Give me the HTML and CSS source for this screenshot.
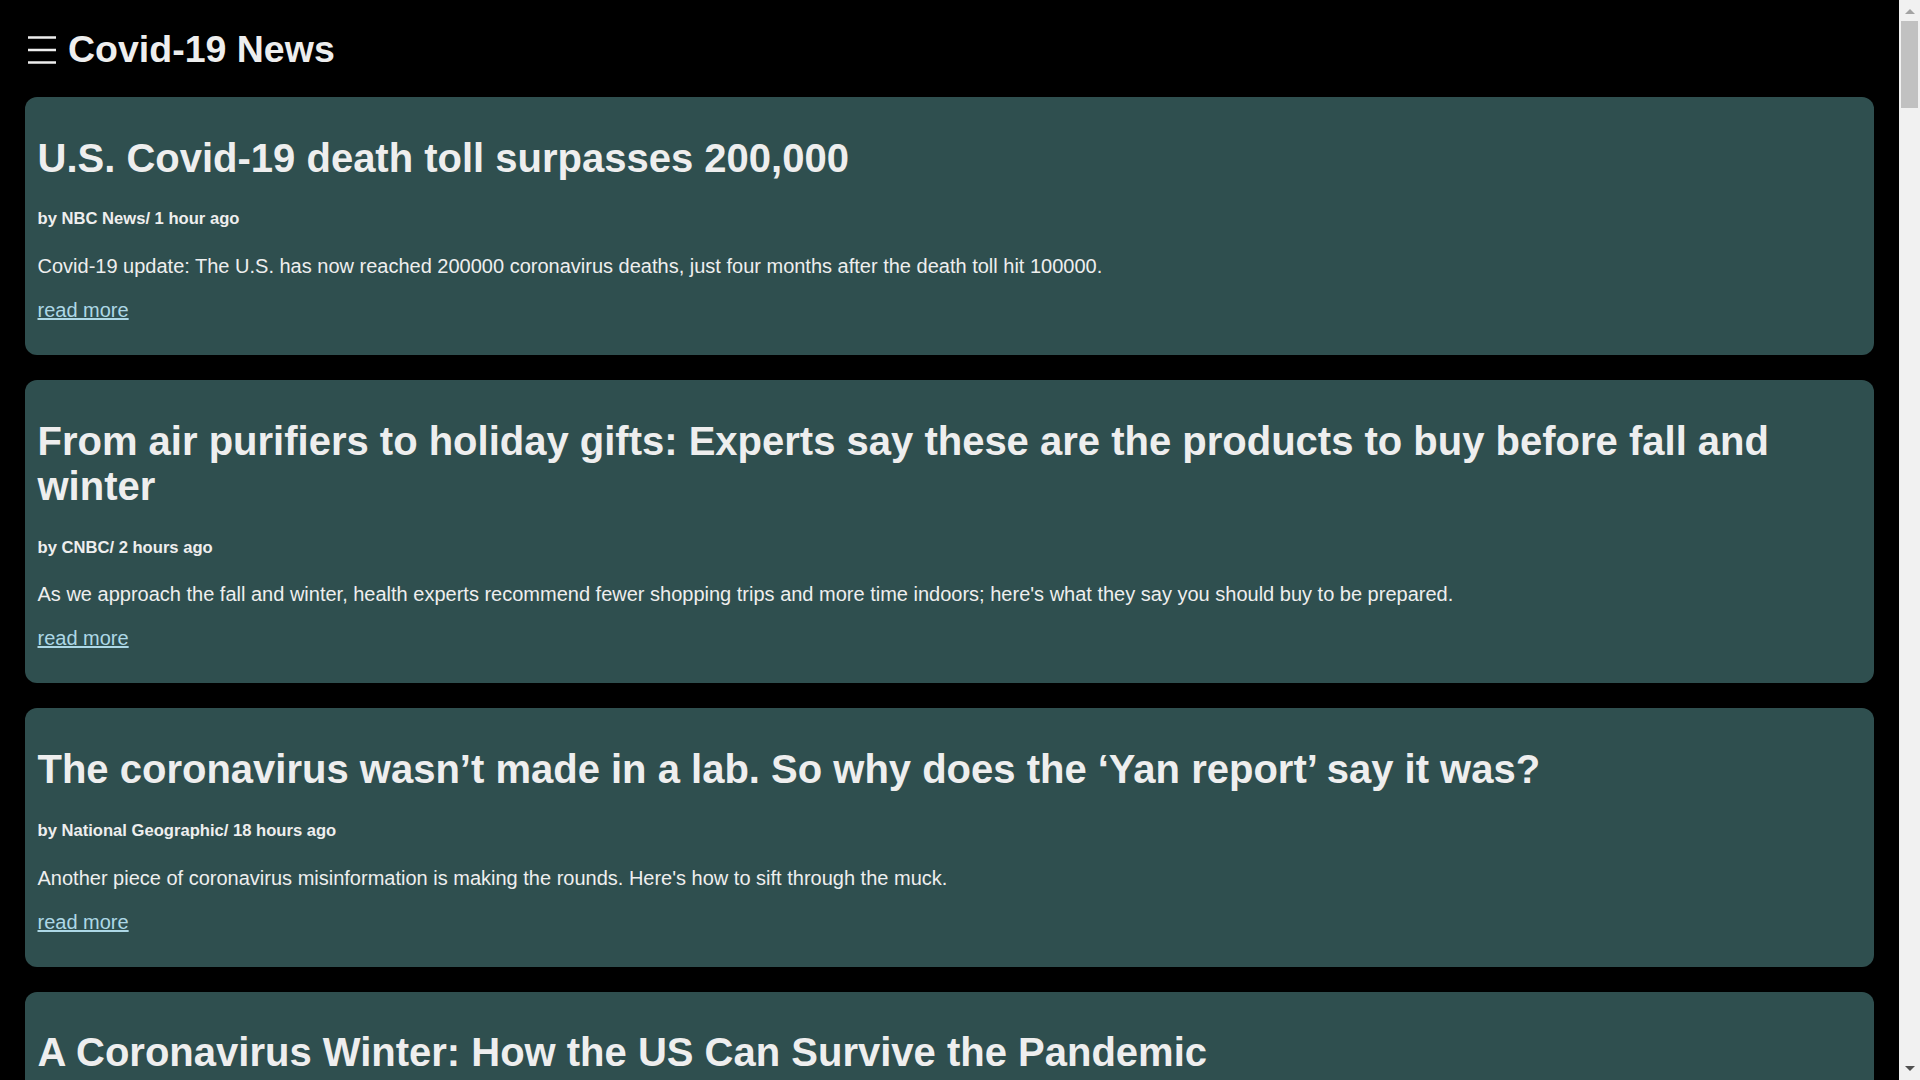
FILE: index.html
```html
<!DOCTYPE html>
<html lang="en">
<head>
<meta charset="utf-8">
<title>Covid-19 News</title>
<link rel="stylesheet" href="styles.css">
</head>
<body>
<header class="topbar">
  <svg class="menu-icon" width="28" height="28" viewBox="0 0 28 28" aria-hidden="true">
    <path d="M0 1.5H28M0 14H28M0 26.5H28" stroke="#eeeeee" stroke-width="2.5" fill="none"/>
  </svg>
  <h1 class="site-title">Covid-19 News</h1>
</header>
<main class="feed">
  <article class="card">
    <h1 class="card-title">U.S. Covid-19 death toll surpasses 200,000</h1>
    <h5 class="card-meta">by NBC News/ 1 hour ago</h5>
    <p class="card-text">Covid-19 update: The U.S. has now reached 200000 coronavirus deaths, just four months after the death toll hit 100000.</p>
    <p class="card-link"><a href="#">read more</a></p>
  </article>
  <article class="card">
    <h1 class="card-title">From air purifiers to holiday gifts: Experts say these are the products to buy before fall and winter</h1>
    <h5 class="card-meta">by CNBC/ 2 hours ago</h5>
    <p class="card-text">As we approach the fall and winter, health experts recommend fewer shopping trips and more time indoors; here's what they say you should buy to be prepared.</p>
    <p class="card-link"><a href="#">read more</a></p>
  </article>
  <article class="card">
    <h1 class="card-title">The coronavirus wasn’t made in a lab. So why does the ‘Yan report’ say it was?</h1>
    <h5 class="card-meta">by National Geographic/ 18 hours ago</h5>
    <p class="card-text">Another piece of coronavirus misinformation is making the rounds. Here's how to sift through the muck.</p>
    <p class="card-link"><a href="#">read more</a></p>
  </article>
  <article class="card">
    <h1 class="card-title">A Coronavirus Winter: How the US Can Survive the Pandemic</h1>
    <h5 class="card-meta">by The New York Times/ 20 hours ago</h5>
    <p class="card-text">As the weather turns colder and people move indoors, experts say a few simple measures can keep the virus in check.</p>
    <p class="card-link"><a href="#">read more</a></p>
  </article>
  <article class="card">
    <h1 class="card-title">What we know about coronavirus vaccines so far</h1>
    <h5 class="card-meta">by BBC News/ 1 day ago</h5>
    <p class="card-text">Several vaccine candidates are now in late-stage trials. Here is where each of them stands.</p>
    <p class="card-link"><a href="#">read more</a></p>
  </article>
  <article class="card">
    <h1 class="card-title">Schools weigh reopening plans as cases rise</h1>
    <h5 class="card-meta">by Reuters/ 1 day ago</h5>
    <p class="card-text">Districts across the country are balancing in-person learning against the risk of new outbreaks.</p>
    <p class="card-link"><a href="#">read more</a></p>
  </article>
</main>
<div class="scrollbar" aria-hidden="true">
  <div class="scroll-btn"><span class="arrow-up"></span></div>
  <div class="scroll-thumb"></div>
  <div class="scroll-track"></div>
  <div class="scroll-btn"><span class="arrow-down"></span></div>
</div>
</body>
</html>
```

FILE: styles.css
```css
html {
  background: #000000;
}

body {
  margin: 0;
  padding-right: 21px;
  background: #000000;
  color: #eeeeee;
  font-family: "Liberation Sans", Arial, sans-serif;
}

.topbar {
  display: flex;
  align-items: center;
  gap: 12px;
  padding: 28px 25px 0 28px;
}

.menu-icon {
  display: block;
  flex: none;
}

.site-title {
  margin: 0;
  font-size: 37.5px;
  line-height: 43px;
  font-weight: bold;
}

.feed {
  padding: 26px 25px 25px;
}

.card {
  background: #2f4f4f;
  border-radius: 12px;
  padding: 12px 12.5px 14px;
  margin-bottom: 25px;
}

.card-title {
  font-size: 40px;
  line-height: 45px;
  font-weight: bold;
  margin: 26.8px 0;
}

.card-meta {
  font-size: 16.6px;
  line-height: 19px;
  font-weight: bold;
  margin: 28.7px 0 26.7px;
}

.card-text,
.card-link {
  font-size: 20px;
  line-height: 23px;
  margin: 20px 0;
}

.card-link {
  margin: 21px 0 19px;
}

.card-link a {
  color: #add8e6;
  text-decoration: underline;
}

/* window scrollbar drawn over the right edge */
.scrollbar {
  position: fixed;
  top: 0;
  right: 0;
  width: 21px;
  height: 100vh;
  background: #f1f1f1;
  display: flex;
  flex-direction: column;
}

.scroll-btn {
  height: 21px;
  flex: none;
  display: flex;
  align-items: center;
  justify-content: center;
}

.arrow-up {
  width: 0;
  height: 0;
  border-left: 5px solid transparent;
  border-right: 5px solid transparent;
  border-bottom: 5px solid #a3a3a3;
  margin-top: 1px;
}

.arrow-down {
  width: 0;
  height: 0;
  border-left: 5px solid transparent;
  border-right: 5px solid transparent;
  border-top: 5px solid #505050;
  margin-top: -2px;
}

.scroll-thumb {
  flex: none;
  height: 87px;
  margin: 0 2px;
  background: #c1c1c1;
}

.scroll-track {
  flex: 1;
}
```
